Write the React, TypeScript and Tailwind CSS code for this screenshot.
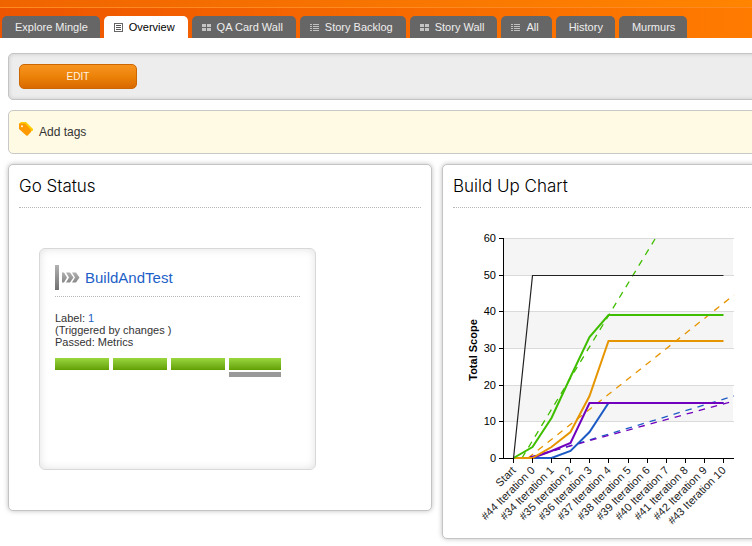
import React from "react";

type IconKind = "page" | "grid" | "list";

const tabs: { label: string; icon?: IconKind; active?: boolean }[] = [
  { label: "Explore Mingle" },
  { label: "Overview", icon: "page", active: true },
  { label: "QA Card Wall", icon: "grid" },
  { label: "Story Backlog", icon: "list" },
  { label: "Story Wall", icon: "grid" },
  { label: "All", icon: "list" },
  { label: "History" },
  { label: "Murmurs" },
];

function TabIcon({ kind }: { kind: IconKind }) {
  if (kind === "page") {
    return (
      <svg width="9" height="9" viewBox="0 0 9 9" shapeRendering="crispEdges" aria-hidden="true">
        <rect x="0.5" y="0.5" width="8" height="8" fill="none" stroke="#666" />
        <path d="M2 2.5h5M2 4.5h5M2 6.5h5" stroke="#555" />
      </svg>
    );
  }
  if (kind === "grid") {
    return (
      <svg width="9" height="9" viewBox="0 0 9 9" shapeRendering="crispEdges" fill="#c4c4c4" aria-hidden="true">
        <path d="M0 1h4v3H0zM5 1h4v3H5zM0 5h4v3H0zM5 5h4v3H5z" />
      </svg>
    );
  }
  return (
    <svg width="9" height="9" viewBox="0 0 9 9" shapeRendering="crispEdges" stroke="#c0c0c0" aria-hidden="true">
      <path d="M0 1.5h2M3 1.5h6M0 3.5h2M3 3.5h6M0 5.5h2M3 5.5h6M0 7.5h2M3 7.5h6" />
    </svg>
  );
}

function TagIcon() {
  return (
    <svg width="15" height="15" viewBox="0 0 15 15" aria-hidden="true">
      <path d="M0 2L2 0H7L14 7V8.5L11 10z" fill="#ffcc00" />
      <path d="M0 1.5H6L12 8V10L8.5 13.8H7.5L0 7z" fill="#ff9900" />
      <circle cx="3" cy="4.2" r="1" fill="#fffae3" />
    </svg>
  );
}

function PipelineIcon() {
  return (
    <svg width="25" height="25" viewBox="0 0 25 25" aria-hidden="true">
      <defs>
        <linearGradient id="bar" x1="0" y1="0" x2="0" y2="1">
          <stop offset="0" stopColor="#b2b2b2" />
          <stop offset="1" stopColor="#707070" />
        </linearGradient>
        <linearGradient id="arrows" x1="0" y1="0" x2="0" y2="1">
          <stop offset="0" stopColor="#b0b0b0" />
          <stop offset="1" stopColor="#888" />
        </linearGradient>
      </defs>
      <rect width="4" height="25" fill="url(#bar)" />
      <path
        d="M7 7.5h2l3 5l-3 5H7zM11 7.5h4l3.5 5l-3.5 5h-4l3-5zM17 7.5h4l3.5 5l-3.5 5h-4l3-5z"
        fill="url(#arrows)"
      />
    </svg>
  );
}

const ticks = ["Start", "#44 Iteration 0", "#34 Iteration 1", "#35 Iteration 2", "#36 Iteration 3", "#37 Iteration 4", "#38 Iteration 5", "#39 Iteration 6", "#40 Iteration 7", "#41 Iteration 8", "#42 Iteration 9", "#43 Iteration 10"];

const hold = (head: number[]) => [...head, ...Array(12 - head.length).fill(head[head.length - 1])];

const thinLine = { color: "#222222", values: hold([0, 50]) };

const series = [
  { color: "#1c5bc4", values: hold([0, 0, 0, 2, 7, 15]) },
  { color: "#7000be", values: hold([0, 0, 2, 4, 15]) },
  { color: "#e69500", values: hold([0, 0, 3, 7, 17, 32]) },
  { color: "#3fbe00", values: hold([0, 3, 11, 22, 33, 39]) },
];

const trends = [
  { color: "#3fbe00", d: "M69 250L202 31" },
  { color: "#e69500", d: "M75 250L281 87" },
  { color: "#1c5bc4", d: "M77 250L281 188" },
  { color: "#7000be", d: "M77 249L281 193" },
];

const tickX = (i: number) => Math.round(60 + (i * 210) / 11) + 0.5;
const gridY = (v: number) => Math.round(250 - (v * 220) / 60) + 0.5;
const lineY = (v: number) => Math.round(250 - (v * 220) / 60);

function BuildUpChart() {
  return (
    <svg
      width="290"
      height="320"
      viewBox="0 0 290 320"
      className="block font-['Liberation_Sans',Arial,sans-serif] text-[11px]"
      role="img"
      aria-label="Build up chart"
    >
      {[10, 30, 50].map((v) => (
        <rect key={v} x="51" y={gridY(v + 10)} width="229" height={gridY(v) - gridY(v + 10)} fill="#f5f5f5" />
      ))}
      {[10, 20, 30, 40, 50, 60].map((v) => (
        <path key={v} d={`M51 ${gridY(v)}H281`} stroke="#dadada" />
      ))}
      {trends.map((t) => (
        <path key={t.color} d={t.d} stroke={t.color} strokeWidth="1.3" strokeDasharray="6.5 6" fill="none" />
      ))}
      <path d="M50.5 30V250.5H281" stroke="#000" fill="none" />
      {series.map((s) => (
        <polyline
          key={s.color}
          points={s.values.map((v, i) => `${tickX(i)},${lineY(v)}`).join(" ")}
          stroke={s.color}
          strokeWidth="2"
          fill="none"
        />
      ))}
      <polyline
        points={thinLine.values.map((v, i) => `${tickX(i)},${gridY(v)}`).join(" ")}
        stroke={thinLine.color}
        strokeWidth="1.2"
        fill="none"
      />
      {[0, 10, 20, 30, 40, 50, 60].map((v) => (
        <g key={v}>
          <path d={`M46 ${gridY(v)}H51`} stroke="#000" />
          <text x="43" y={gridY(v) + 3.5} textAnchor="end">
            {v}
          </text>
        </g>
      ))}
      {ticks.map((label, i) => (
        <g key={label}>
          <path d={`M${tickX(i)} 250V255`} stroke="#000" />
          <text textAnchor="end" fill="#222" transform={`translate(${tickX(i) + 3} 263) rotate(-45)`}>
            {label}
          </text>
        </g>
      ))}
      <text textAnchor="middle" fontWeight="bold" transform="translate(24 142) rotate(-90)">
        Total Scope
      </text>
    </svg>
  );
}

function Panel({ title, children }: { title: string; children: React.ReactNode }) {
  return (
    <section className="rounded-[5px] border border-[#c4c4c4] bg-white p-2.5 shadow-[0_0_5px_rgba(0,0,0,0.25)]">
      <h2 className="border-b border-dotted border-[#b8b8b8] pb-2.5 font-['Inter','Liberation_Sans',sans-serif] text-[17px] leading-[22px] font-light text-black">
        {title}
      </h2>
      {children}
    </section>
  );
}

export default function App() {
  return (
    <div className="overflow-hidden bg-white pb-2 font-['Liberation_Sans',Arial,sans-serif] text-[#333]">
      <header className="bg-linear-to-r from-[#ee5500] to-[#ff7b00]">
        <div className="h-2 border-b border-[#ff8a22] bg-linear-to-r from-[#f06400] to-[#ff8400]" />
        <nav className="flex gap-1 pt-2 pl-0.5">
          {tabs.map((tab) => (
            <a
              key={tab.label}
              href="#"
              className={
                "flex h-[22px] items-center gap-1.5 rounded-t-[5px] text-[11px] whitespace-nowrap " +
                (tab.icon ? "pr-[13px] pl-2.5 " : "pr-3 pl-[13px] ") +
                (tab.active ? "bg-white text-black" : "bg-[#666] text-[#eee]")
              }
            >
              {tab.icon && <TabIcon kind={tab.icon} />}
              {tab.label}
            </a>
          ))}
        </nav>
      </header>

      <main className="flex w-[calc(100%+122px)] flex-col gap-2.5 px-2 pt-[15px]">
        <div className="rounded-[5px] border border-[#c4c4c4] bg-[#ededed] p-2.5 shadow-[inset_0_0_4px_rgba(0,0,0,0.15)]">
          <button className="block h-[25px] w-[118px] rounded-[5px] border border-[#cc6600] bg-linear-to-b from-[#f7941e] from-0% via-[#ec8208] via-50% to-[#d96a00] to-100% text-[10px] text-[#fff3e0]">
            EDIT
          </button>
        </div>

        <div className="flex h-11 items-center gap-[5px] rounded-[5px] border border-[#c8c8c8] bg-[#fffae3] px-2.5">
          <div className="pb-1.5">
            <TagIcon />
          </div>
          <button className="text-[12px]">Add tags</button>
        </div>

        <div className="grid grid-cols-2 items-start gap-2.5">
          <Panel title="Go Status">
            <div className="mx-5 mt-10 mb-[30px] h-[222px] w-[277px] rounded-[6px] border border-[#d8d8d8] px-[15px] pt-4 shadow-[inset_0_0_8px_rgba(0,0,0,0.12)]">
              <h3 className="flex items-center gap-[5px] border-b border-dotted border-[#b8b8b8] pb-1.5 text-[15px] leading-[25px]">
                <PipelineIcon />
                <a href="#" className="text-[#1d5fc8]">
                  BuildAndTest
                </a>
              </h3>
              <p className="mt-[15px] text-[11px] leading-3">
                Label:{" "}
                <a href="#" className="text-[#1d5fc8]">
                  1
                </a>
                <br />
                (Triggered by changes )
                <br />
                Passed: Metrics
              </p>
              <div className="mt-2.5 flex gap-1">
                <div className="h-3 w-[54px] bg-linear-to-b from-[#9ad63c] to-[#62a000]" />
                <div className="h-3 w-[54px] bg-linear-to-b from-[#9ad63c] to-[#62a000]" />
                <div className="h-3 w-[54px] bg-linear-to-b from-[#9ad63c] to-[#62a000]" />
                <div className="flex w-[52px] flex-col gap-0.5">
                  <div className="h-3 bg-linear-to-b from-[#9ad63c] to-[#62a000]" />
                  <div className="h-[5px] bg-[#999]" />
                </div>
              </div>
            </div>
          </Panel>
          <Panel title="Build Up Chart">
            <BuildUpChart />
          </Panel>
        </div>
      </main>
    </div>
  );
}
